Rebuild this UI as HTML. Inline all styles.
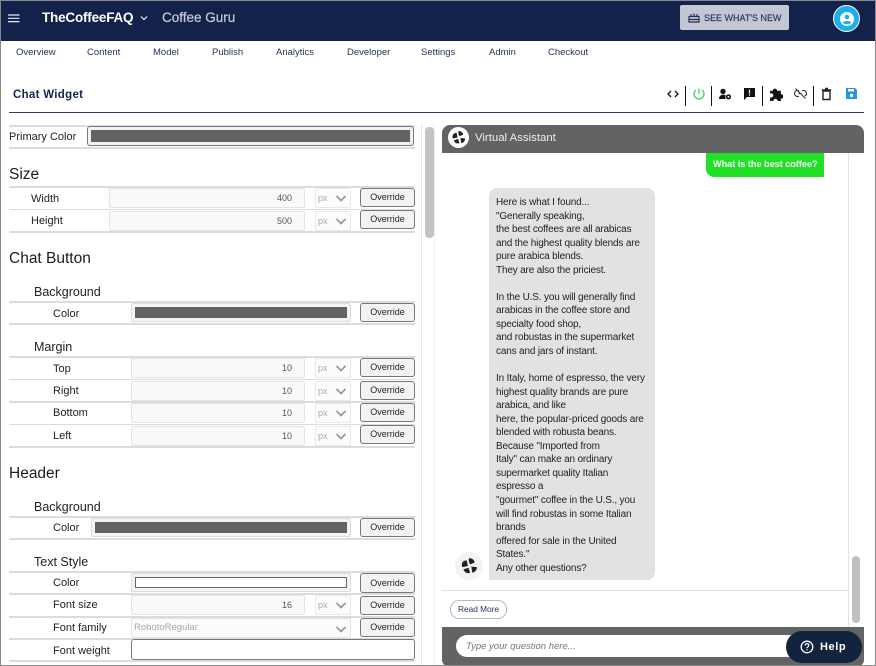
<!DOCTYPE html>
<html><head><meta charset="utf-8"><style>
html,body{margin:0;padding:0;background:#fff}
#p{position:relative;width:876px;height:666px;overflow:hidden;background:#fff;font-family:"Liberation Sans",sans-serif;color:#1a1a1a}
#p div,#p span,#p svg{position:absolute}
.t{white-space:nowrap;line-height:14px}
.nav{top:47px;font-size:9.5px;color:#1f2f57;white-space:nowrap;line-height:12px}
.l{left:9px;width:406px;height:1.5px;background:#dcdcdc}
.lb{font-size:11px;color:#222;white-space:nowrap;line-height:14px;margin-top:1px}
.h{font-size:15.5px;left:9px;color:#1c1c1c;white-space:nowrap;line-height:18px;margin-top:1px}
.s{font-size:12.5px;left:34px;color:#222;white-space:nowrap;line-height:14px;margin-top:1px}
.b{left:360px;width:53px;height:17px;border:1px solid #777;border-radius:3px;background:#f3f3f3;font-size:9px;text-align:center;line-height:17px;color:#222}
.i{height:20px;background:#f9f9f9;border:1px solid #e4e4e4;border-radius:2px;font-size:9px;color:#555;text-align:right;line-height:18px;box-sizing:border-box;padding-right:12px}
.u{left:315px;width:36px;height:20px;border:1px solid #e9e9e9;border-radius:2px;box-sizing:border-box;background:#fcfcfc;font-size:9px;color:#aaa;line-height:19px;padding-left:2px}
.u svg,.sv{right:3px;top:6px;width:12px;height:7px}
.c{height:19px;background:#f3f3f3;border:1px solid #ddd;border-radius:2px;box-sizing:border-box}
.c div{left:3px;right:3px;top:3px;bottom:3px;background:#636363}
.v{width:1px;height:20px;top:86px;background:#111}
.m{left:496px;top:196px;font-size:10px;letter-spacing:-.17px;line-height:13.55px;color:#222;white-space:pre}
</style></head><body><div id="p">
<div style="left:0;top:0;width:876px;height:40.500px;background:#12224a"></div>
<svg style="left:8px;top:14px;width:12px;height:9px" viewBox="0 0 12 9"><path d="M0 1h11.500M0 4.300h11.500M0 7.600h11.500" stroke="#e8eaf0" stroke-width="1.200"/></svg>
<div class="t" style="left:42px;top:9px;font-size:13.500px;font-weight:bold;color:#fff;line-height:17px;letter-spacing:-.2px">TheCoffeeFAQ</div>
<svg style="left:140px;top:15px;width:8px;height:6px" viewBox="0 0 8 6"><path d="M1 1.500l3 3 3-3" fill="none" stroke="#e8eaf0" stroke-width="1.200"/></svg>
<div class="t" style="left:162px;top:9px;font-size:13.500px;color:#c4c9d6;line-height:17px;-webkit-text-stroke:.25px #c4c9d6">Coffee Guru</div>
<div style="left:680px;top:5px;width:109px;height:25px;background:#c3c7d1;border-radius:2px"></div>
<svg style="left:688px;top:12px;width:12px;height:11px" viewBox="0 0 12 11"><path d="M1 4.500h10v5.500H1zM1 7.500h10M3 4.500V2M6 4.500V1.500M9 4.500V2" fill="none" stroke="#1f2f57" stroke-width="1.200"/></svg>
<div class="t" style="left:704px;top:11px;font-size:9px;color:#26355f;-webkit-text-stroke:.15px #26355f">SEE WHAT'S NEW</div>
<div style="left:833px;top:5px;width:25px;height:25px;border-radius:50%;background:#1eaef0;border:1.500px solid #fff"></div>
<svg style="left:839px;top:11px;width:16px;height:16px" viewBox="0 0 16 16"><circle cx="8" cy="8" r="7" fill="#fff"/><circle cx="8" cy="6" r="2.300" fill="#1eaef0"/><path d="M3.500 11.500c1.500-2 7.500-2 9 0-2 2.300-7 2.300-9 0z" fill="#1eaef0"/></svg>

<div class="nav" style="left:16px">Overview</div><div class="nav" style="left:87px">Content</div><div class="nav" style="left:153px">Model</div><div class="nav" style="left:212px">Publish</div><div class="nav" style="left:276px">Analytics</div><div class="nav" style="left:347px">Developer</div><div class="nav" style="left:421px">Settings</div><div class="nav" style="left:489px">Admin</div><div class="nav" style="left:548px">Checkout</div>

<div class="t" style="left:13px;top:88px;font-size:11.500px;font-weight:bold;color:#14264f;letter-spacing:.3px">Chat Widget</div>
<div style="left:9px;top:112px;width:855px;height:1.300px;background:#2a3b68"></div>

<svg style="left:666px;top:88px;width:14px;height:12px" viewBox="0 0 14 12"><path d="M5 3L2 6l3 3M9 3l3 3-3 3" fill="none" stroke="#111" stroke-width="1.300"/></svg>
<div class="v" style="left:685px"></div>
<svg style="left:692px;top:87px;width:14px;height:14px" viewBox="0 0 14 14"><path d="M7 1.500v5.500M4 3a5 5 0 1 0 6 0" fill="none" stroke="#3fd65a" stroke-width="1.300"/></svg>
<div class="v" style="left:711px"></div>
<svg style="left:718px;top:87px;width:14px;height:14px" viewBox="0 0 14 14"><circle cx="5" cy="4.500" r="2.700" fill="#111"/><path d="M1 12c0-3 2-4.300 4-4.300s2.500.3 2.500.3v4z" fill="#111"/><circle cx="10.500" cy="9.800" r="1.800" fill="none" stroke="#111" stroke-width="1.600"/></svg>
<svg style="left:743px;top:87px;width:13px;height:13px" viewBox="0 0 13 13"><path d="M1 1h11v9H4l-3 3z" fill="#111"/><path d="M6.500 2.800v3.700M6.500 7.300v1.300" stroke="#fff" stroke-width="1.200"/></svg>
<div class="v" style="left:762px"></div>
<svg style="left:769px;top:87px;width:14px;height:14px" viewBox="0 0 13 13"><path d="M1 3.500h2.500a2 2 0 1 1 4 0H11v3.300a2 2 0 1 1 0 3.900V13H8a2 2 0 1 0-4 0H1V9.500a2 2 0 1 0 0-3.500z" fill="#111"/></svg>
<svg style="left:794px;top:87px;width:13px;height:13px" viewBox="0 0 13 13"><path d="M5 3.500H3.500a3 3 0 0 0 0 6H5M8 3.500h1.500a3 3 0 0 1 1.500 5.600M4.500 6.500h2M1.500 1.500l10 10" fill="none" stroke="#333" stroke-width="1.100"/></svg>
<div class="v" style="left:813px"></div>
<svg style="left:820px;top:87px;width:13px;height:14px" viewBox="0 0 13 14"><path d="M3 4v8.500h7V4zM1.800 3h9.400M5 1.500h3" fill="none" stroke="#222" stroke-width="1.400"/></svg>
<svg style="left:845px;top:87px;width:13px;height:13px" viewBox="0 0 13 13"><path d="M1 1h9l2 2v9H1z" fill="#2196e8"/><rect x="3" y="2" width="6" height="2.500" fill="#fff"/><circle cx="6.500" cy="8.500" r="1.700" fill="#fff"/></svg>

<div style="left:421px;top:125px;width:1px;height:541px;background:#e6e6e6"></div>
<div style="left:434px;top:125px;width:1px;height:541px;background:#eee"></div>
<div style="left:425px;top:127px;width:8.500px;height:111px;background:#c4c4c4;border-radius:4px"></div>

<!-- form -->
<div class="l" style="top:125px"></div><div class="l" style="top:147px"></div>
<div class="lb" style="left:9px;top:129px">Primary Color</div>
<div style="left:87px;top:126px;width:327px;height:20px;border:1px solid #777;border-radius:3px;box-sizing:border-box;background:#f2f2f2"><div style="left:3px;right:3px;top:3px;bottom:3px;background:#636363"></div></div>

<div class="h" style="top:165px">Size</div>
<div class="l" style="top:186px"></div><div class="l" style="top:208.500px"></div><div class="l" style="top:231px"></div>
<div class="lb" style="left:31px;top:191px">Width</div><div class="i" style="left:109px;top:188px;width:196px">400</div><div class="u" style="top:188px">px<svg viewBox="0 0 12 7"><path d="M1.500 1l4.500 4.500L10.500 1" fill="none" stroke="#999" stroke-width="1.700"/></svg></div><div class="b" style="top:188px">Override</div>
<div class="lb" style="left:31px;top:213px">Height</div><div class="i" style="left:109px;top:210.500px;width:196px">500</div><div class="u" style="top:210.500px">px<svg viewBox="0 0 12 7"><path d="M1.500 1l4.500 4.500L10.500 1" fill="none" stroke="#999" stroke-width="1.700"/></svg></div><div class="b" style="top:210px">Override</div>

<div class="h" style="top:249px">Chat Button</div>
<div class="s" style="top:284px">Background</div>
<div class="l" style="top:301px"></div><div class="l" style="top:323px"></div>
<div class="lb" style="left:53px;top:306px">Color</div><div class="c" style="left:131px;top:303px;width:220px"><div></div></div><div class="b" style="top:303px">Override</div>

<div class="s" style="top:339px">Margin</div>
<div class="l" style="top:356px"></div><div class="l" style="top:378.500px"></div><div class="l" style="top:401px"></div><div class="l" style="top:423.500px"></div><div class="l" style="top:446px"></div>
<div class="lb" style="left:53px;top:361px">Top</div><div class="i" style="left:131px;top:358px;width:174px">10</div><div class="u" style="top:358px">px<svg viewBox="0 0 12 7"><path d="M1.500 1l4.500 4.500L10.500 1" fill="none" stroke="#999" stroke-width="1.700"/></svg></div><div class="b" style="top:358px">Override</div>
<div class="lb" style="left:53px;top:383px">Right</div><div class="i" style="left:131px;top:380.500px;width:174px">10</div><div class="u" style="top:380.500px">px<svg viewBox="0 0 12 7"><path d="M1.500 1l4.500 4.500L10.500 1" fill="none" stroke="#999" stroke-width="1.700"/></svg></div><div class="b" style="top:381px">Override</div>
<div class="lb" style="left:53px;top:405px">Bottom</div><div class="i" style="left:131px;top:403px;width:174px">10</div><div class="u" style="top:403px">px<svg viewBox="0 0 12 7"><path d="M1.500 1l4.500 4.500L10.500 1" fill="none" stroke="#999" stroke-width="1.700"/></svg></div><div class="b" style="top:403px">Override</div>
<div class="lb" style="left:53px;top:428px">Left</div><div class="i" style="left:131px;top:425.500px;width:174px">10</div><div class="u" style="top:425.500px">px<svg viewBox="0 0 12 7"><path d="M1.500 1l4.500 4.500L10.500 1" fill="none" stroke="#999" stroke-width="1.700"/></svg></div><div class="b" style="top:425px">Override</div>

<div class="h" style="top:464px">Header</div>
<div class="s" style="top:499px">Background</div>
<div class="l" style="top:516px"></div><div class="l" style="top:538px"></div>
<div class="lb" style="left:53px;top:520px">Color</div><div class="c" style="left:91px;top:518px;width:260px"><div></div></div><div class="b" style="top:518px">Override</div>

<div class="s" style="top:554px">Text Style</div>
<div class="l" style="top:571px"></div><div class="l" style="top:593px"></div><div class="l" style="top:616px"></div><div class="l" style="top:638px"></div><div class="l" style="top:660px"></div>
<div class="lb" style="left:53px;top:575px">Color</div><div class="c" style="left:131px;top:573px;width:220px"><div style="background:#fff;border:1px solid #666"></div></div><div class="b" style="top:573px;height:18px;line-height:18px">Override</div>
<div class="lb" style="left:53px;top:597px">Font size</div><div class="i" style="left:131px;top:595px;width:174px">16</div><div class="u" style="top:595px">px<svg viewBox="0 0 12 7"><path d="M1.500 1l4.500 4.500L10.500 1" fill="none" stroke="#999" stroke-width="1.700"/></svg></div><div class="b" style="top:596px">Override</div>
<div class="lb" style="left:53px;top:620px">Font family</div><div class="i" style="left:131px;top:618px;width:220px;background:#fbfbfb;text-align:left;padding-left:2px;color:#aaa;font-size:9.500px">RobotoRegular<svg class="sv" style="top:7px;right:3px" viewBox="0 0 12 7"><path d="M1.500 1l4.500 4.500L10.500 1" fill="none" stroke="#999" stroke-width="1.700"/></svg></div><div class="b" style="top:618px">Override</div>
<div class="lb" style="left:53px;top:643px">Font weight</div><div style="left:131px;top:639px;width:284px;height:21px;border:1px solid #777;border-radius:3px;box-sizing:border-box;background:#fff"></div>

<!-- chat -->
<div style="left:442px;top:125px;width:422px;height:28px;background:#636363;border-radius:8px 8px 0 0"></div>
<div style="left:448px;top:127px;width:21px;height:21px;border-radius:50%;background:#fff"></div>
<svg style="left:451px;top:130px;width:15px;height:15px" viewBox="0 0 16 16"><path d="M8 1c3 0 5 2 5 4L9 6.500C8 5 7.500 3 8 1zM2 5c1-1.500 2.500-2 4-2l1 5-5 1C1.500 8 1.500 6.500 2 5zM3 11l4.500-1.500L9 14c-3 1-5-.5-6-3zM10 8.500l5 .5c0 2.500-1.500 4.500-4 5z" fill="#222"/></svg>
<div class="t" style="left:475px;top:131px;font-size:11.400px;color:#eee">Virtual Assistant</div>
<div style="left:848px;top:153px;width:1px;height:474px;background:#e4e4e4"></div>
<div style="left:706px;top:153px;width:118px;height:24px;background:#22e028;border-radius:0 0 0 8px"></div>
<div class="t" style="left:713px;top:157px;font-size:9.100px;font-weight:bold;color:#fff">What is the best coffee?</div>
<div style="left:489px;top:188px;width:166px;height:392px;background:#e1e3e1;border-radius:8px 8px 8px 0"></div>
<div class="m">Here is what I found...
"Generally speaking,
the best coffees are all arabicas
and the highest quality blends are
pure arabica blends.
They are also the priciest.

In the U.S. you will generally find
arabicas in the coffee store and
specialty food shop,
and robustas in the supermarket
cans and jars of instant.

In Italy, home of espresso, the very
highest quality brands are pure
arabica, and like
here, the popular-priced goods are
blended with robusta beans.
Because "Imported from
Italy" can make an ordinary
supermarket quality Italian
espresso a
"gourmet" coffee in the U.S., you
will find robustas in some Italian
brands
offered for sale in the United
States."
Any other questions?</div>
<div style="left:455px;top:552px;width:28px;height:28px;border-radius:50%;background:#f3f3f3"></div>
<svg style="left:460px;top:557px;width:18px;height:18px" viewBox="0 0 16 16"><path d="M8 1c3 0 5 2 5 4L9 6.500C8 5 7.500 3 8 1zM2 5c1-1.500 2.500-2 4-2l1 5-5 1C1.500 8 1.500 6.500 2 5zM3 11l4.500-1.500L9 14c-3 1-5-.5-6-3zM10 8.500l5 .5c0 2.500-1.500 4.500-4 5z" fill="#222"/></svg>
<div style="left:442px;top:590px;width:406px;height:1px;background:#ddd"></div>
<div style="left:450px;top:600px;width:55px;height:17px;border:1px solid #b5b9c6;border-radius:9px;font-size:8.300px;line-height:17px;text-align:center;color:#26355f">Read More</div>
<div style="left:852px;top:556px;width:8px;height:67px;background:#c0c0c0;border-radius:4px"></div>
<div style="left:442px;top:627px;width:422px;height:39px;background:#636363;border-radius:0 0 6px 6px"></div>
<div style="left:456px;top:635px;width:350px;height:22px;background:#fff;border-radius:11px"></div>
<div class="t" style="left:466px;top:640px;font-size:9.500px;font-style:italic;color:#777">Type your question here...</div>
<div style="left:786px;top:631px;width:76px;height:32px;background:#10233f;border-radius:16px"></div>
<svg style="left:800px;top:640px;width:14px;height:14px" viewBox="0 0 14 14"><circle cx="7" cy="7" r="5.800" fill="none" stroke="#fff" stroke-width="1.300"/><path d="M5.200 5.500c0-2.300 3.600-2.300 3.600 0 0 1.300-1.800 1.400-1.800 2.800M7 9.300v1.200" fill="none" stroke="#fff" stroke-width="1.200"/></svg>
<div class="t" style="left:820px;top:640px;font-size:11px;font-weight:bold;color:#fff;letter-spacing:.6px">Help</div>

<!-- edge border -->
<div style="left:0;top:0;width:876px;height:1px;background:#888"></div>
<div style="left:0;top:0;width:1px;height:666px;background:#888"></div>
<div style="right:0;top:0;width:1.500px;height:666px;background:#888"></div>
<div style="left:0;bottom:0;width:876px;height:1px;background:#888"></div>
</div></body></html>
